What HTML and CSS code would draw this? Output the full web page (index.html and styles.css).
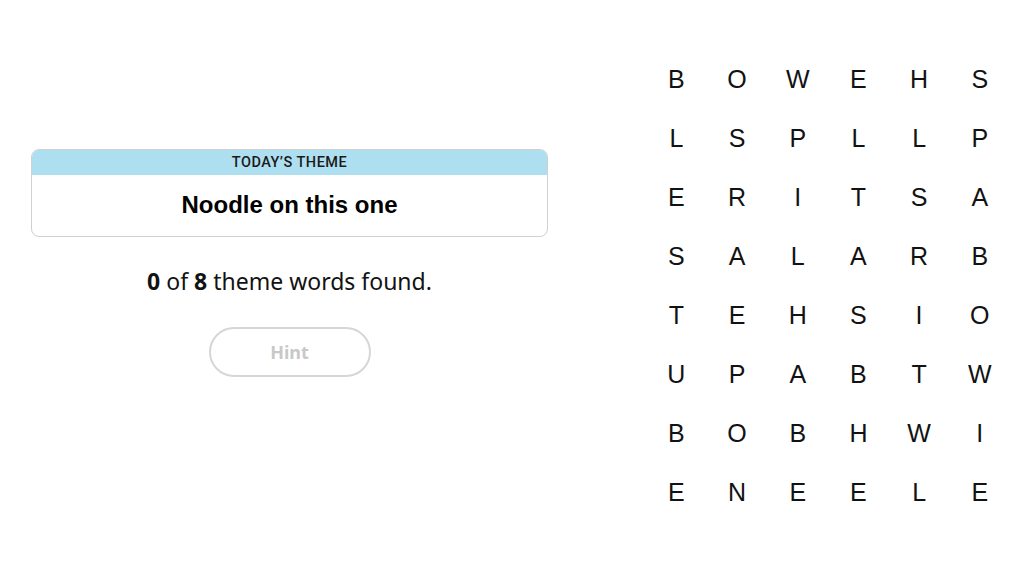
FILE: index.html
```html
<!DOCTYPE html>
<html>
<head>
<meta charset="utf-8">
<link rel="stylesheet" href="styles.css">
</head>
<body>
<div class="page">
  <section class="left">
    <div class="theme-card">
      <div class="theme-head">TODAY’S THEME</div>
      <div class="theme-body">Noodle on this one</div>
    </div>
    <p class="status"><b>0</b> of <b>8</b> theme words found.</p>
    <button class="hint">Hint</button>
  </section>
  <section class="board">
    <span>B</span><span>O</span><span>W</span><span>E</span><span>H</span><span>S</span>
    <span>L</span><span>S</span><span>P</span><span>L</span><span>L</span><span>P</span>
    <span>E</span><span>R</span><span>I</span><span>T</span><span>S</span><span>A</span>
    <span>S</span><span>A</span><span>L</span><span>A</span><span>R</span><span>B</span>
    <span>T</span><span>E</span><span>H</span><span>S</span><span>I</span><span>O</span>
    <span>U</span><span>P</span><span>A</span><span>B</span><span>T</span><span>W</span>
    <span>B</span><span>O</span><span>B</span><span>H</span><span>W</span><span>I</span>
    <span>E</span><span>N</span><span>E</span><span>E</span><span>L</span><span>E</span>
  </section>
</div>
</body>
</html>
```
FILE: styles.css
```css
html, body {
  margin: 0;
  padding: 0;
  background: #fff;
}
body {
  font-family: "Liberation Sans", Arial, sans-serif;
  color: #121212;
}
.page {
  display: flex;
  width: 1024px;
  height: 576px;
}
.left {
  flex: 0 0 auto;
  width: 517px;
  padding: 149px 31px 0 31px;
  display: flex;
  flex-direction: column;
  align-items: center;
}
.theme-card {
  width: 100%;
  box-sizing: border-box;
  border: 1px solid #d0d0d0;
  border-radius: 8px;
  overflow: hidden;
}
.theme-head {
  background: #aedff0;
  height: 25px;
  line-height: 26px;
  text-align: center;
  font-family: Roboto, "Liberation Sans", Arial, sans-serif;
  font-weight: 500;
  font-size: 14.5px;
  letter-spacing: 0.5px;
  color: #1a1a1a;
}
.theme-body {
  height: 61px;
  line-height: 60px;
  text-align: center;
  font-weight: bold;
  font-size: 24px;
  color: #000;
}
.status {
  margin: 25px 0 0 0;
  font-family: "Noto Sans", "Open Sans", sans-serif;
  font-size: 23px;
  line-height: 38px;
  color: #121212;
}
.status b {
  font-weight: bold;
}
.hint {
  margin-top: 27px;
  width: 162px;
  height: 50px;
  border: 2px solid #d6d6d6;
  border-radius: 25px;
  background: #fff;
  color: #c8c8c8;
  font-family: "Noto Sans", "Open Sans", sans-serif;
  font-weight: bold;
  font-size: 18px;
}
.board {
  flex: 0 0 auto;
  margin: 50px 0 0 67px;
  display: grid;
  grid-template-columns: repeat(6, 60.7px);
  grid-auto-rows: 59px;
  height: max-content;
}
.board span {
  display: flex;
  align-items: center;
  justify-content: center;
  font-family: "Liberation Sans", Arial, sans-serif;
  font-size: 25px;
  color: #121212;
}
```
